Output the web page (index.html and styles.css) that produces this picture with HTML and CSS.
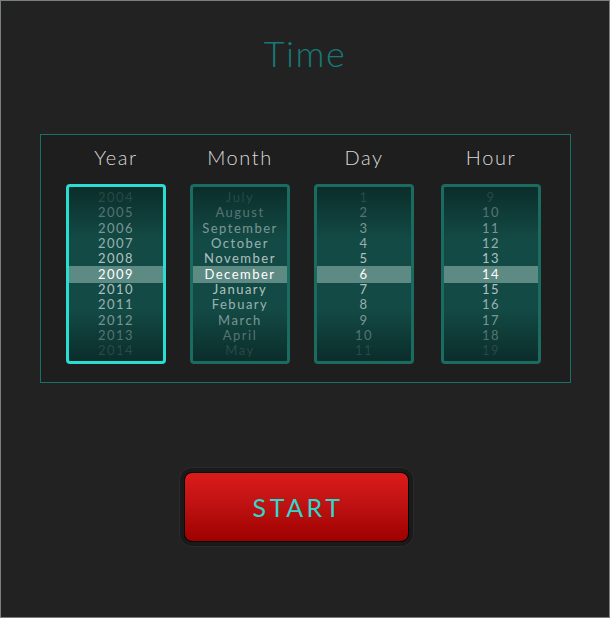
FILE: index.html
```html
<!DOCTYPE html>
<html>
<head>
<meta charset="utf-8">
<link rel="stylesheet" href="styles.css">
</head>
<body>
<div class="app">
  <h1 class="title">Time</h1>
  <div class="panel">
    <div class="col">
      <div class="label">Year</div>
      <div class="wheel active">
        <div class="item d5">2004</div>
        <div class="item d4">2005</div>
        <div class="item d3">2006</div>
        <div class="item d2">2007</div>
        <div class="item d1">2008</div>
        <div class="item sel">2009</div>
        <div class="item d1">2010</div>
        <div class="item d2">2011</div>
        <div class="item d3">2012</div>
        <div class="item d4">2013</div>
        <div class="item d5">2014</div>
      </div>
    </div>
    <div class="col">
      <div class="label">Month</div>
      <div class="wheel">
        <div class="item d5">July</div>
        <div class="item d4">August</div>
        <div class="item d3">September</div>
        <div class="item d2">October</div>
        <div class="item d1">November</div>
        <div class="item sel">December</div>
        <div class="item d1">January</div>
        <div class="item d2">Febuary</div>
        <div class="item d3">March</div>
        <div class="item d4">April</div>
        <div class="item d5">May</div>
      </div>
    </div>
    <div class="col">
      <div class="label">Day</div>
      <div class="wheel">
        <div class="item d5">1</div>
        <div class="item d4">2</div>
        <div class="item d3">3</div>
        <div class="item d2">4</div>
        <div class="item d1">5</div>
        <div class="item sel">6</div>
        <div class="item d1">7</div>
        <div class="item d2">8</div>
        <div class="item d3">9</div>
        <div class="item d4">10</div>
        <div class="item d5">11</div>
      </div>
    </div>
    <div class="col last">
      <div class="label">Hour</div>
      <div class="wheel">
        <div class="item d5">9</div>
        <div class="item d4">10</div>
        <div class="item d3">11</div>
        <div class="item d2">12</div>
        <div class="item d1">13</div>
        <div class="item sel">14</div>
        <div class="item d1">15</div>
        <div class="item d2">16</div>
        <div class="item d3">17</div>
        <div class="item d4">18</div>
        <div class="item d5">19</div>
      </div>
    </div>
  </div>
  <div class="start-wrap">
    <button class="start">START</button>
  </div>
</div>
</body>
</html>
```
FILE: styles.css
```css
html, body {
  margin: 0;
  padding: 0;
  background: #222222;
}
.app {
  box-sizing: border-box;
  width: 610px;
  height: 618px;
  border: 1px solid #7a7f7f;
  background: #222222;
  font-family: Lato, "Open Sans", sans-serif;
  display: flex;
  flex-direction: column;
  align-items: center;
}
.title {
  margin: 30px 0 0;
  height: 103px;
  font-weight: 300;
  font-size: 36px;
  line-height: 44px;
  letter-spacing: 1.5px;
  color: #177a77;
}
.panel {
  box-sizing: border-box;
  width: 531px;
  height: 249px;
  margin-left: 1px;
  border: 1px solid #1b6f6b;
  background: #1e1e1e;
  display: flex;
  padding: 10px 0 0 25px;
  gap: 24px;
}
.col {
  width: 100px;
  display: flex;
  flex-direction: column;
  align-items: center;
}
.col.last {
  margin-left: 3px;
}
.label {
  color: #dadada;
  font-size: 20px;
  font-weight: 300;
  line-height: 24px;
  letter-spacing: 1.6px;
  margin-bottom: 15px;
}
.wheel {
  box-sizing: border-box;
  width: 100px;
  height: 180px;
  border: 3px solid #1a6b60;
  border-radius: 4px;
  background: linear-gradient(to bottom, #0b2d2a 0%, #134a45 30%, #134a45 70%, #0b2d2a 100%);
  padding-top: 3px;
  display: flex;
  flex-direction: column;
}
.wheel.active {
  border-color: #2bdcd0;
}
.item {
  height: 15.33px;
  line-height: 15.33px;
  font-size: 13px;
  letter-spacing: 1.5px;
  text-align: center;
  color: #ffffff;
}
.item.sel {
  background: #5e8a84;
  color: #ffffff;
  height: 16.6px;
  line-height: 16.6px;
  margin: -0.6px 0 -0.7px;
}
.item.d1 { color: rgba(255, 255, 255, 0.68); }
.item.d2 { color: rgba(255, 255, 255, 0.58); }
.item.d3 { color: rgba(255, 255, 255, 0.45); }
.item.d4 { color: rgba(255, 255, 255, 0.3); }
.item.d5 { color: rgba(255, 255, 255, 0.13); }
.start-wrap {
  margin-top: 85px;
  margin-right: 17px;
  padding: 4px;
  border-radius: 12px;
  background: #1a1a1a;
  box-shadow: 0 0 0 1px #2a2a2a;
}
.start {
  box-sizing: border-box;
  width: 225px;
  height: 70px;
  border: 1px solid #000;
  border-radius: 8px;
  background: linear-gradient(to bottom, #db1b1b 0%, #c01212 45%, #9e0000 100%);
  color: #2fd8cf;
  font-family: Lato, "Open Sans", sans-serif;
  font-size: 25px;
  letter-spacing: 3.5px;
  padding: 0 0 0 3px;
  display: block;
}
```
